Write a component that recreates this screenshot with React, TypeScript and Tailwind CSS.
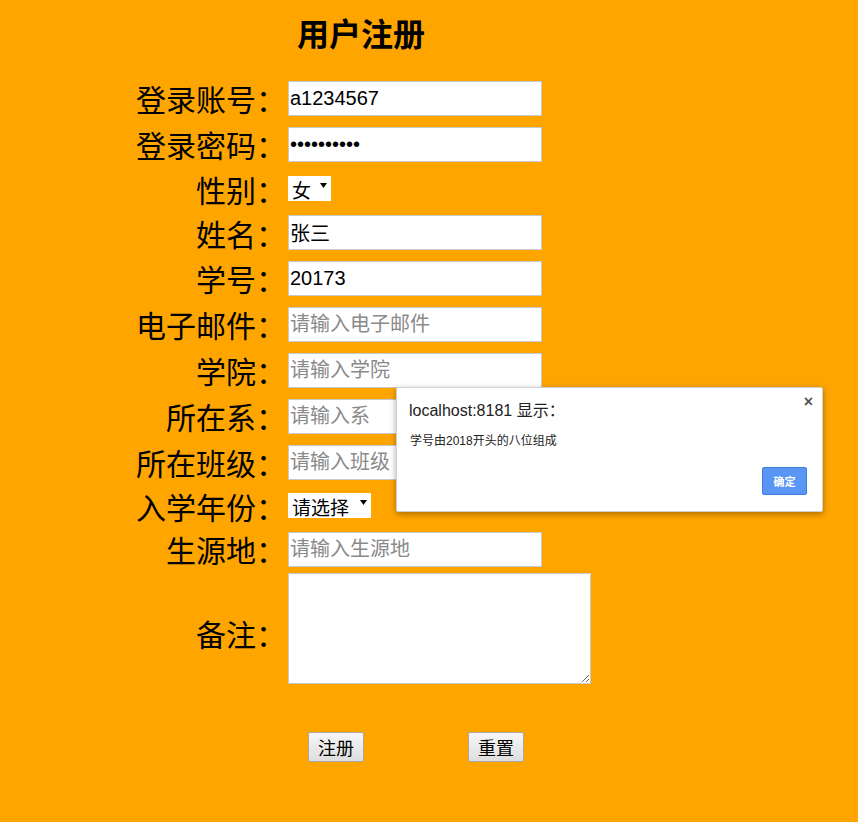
import React from 'react';

const cjk = "font-['Noto_Sans_CJK_SC',sans-serif]";

interface Field {
  label: string;
  kind: 'input' | 'select' | 'textarea';
  value?: string;
  placeholder?: string;
  h: string;
  selectW?: string;
}

const FIELDS: Field[] = [
  { label: '登录账号：', kind: 'input', value: 'a1234567', h: 'h-[46px]' },
  { label: '登录密码：', kind: 'input', value: '••••••••••', h: 'h-[46px]' },
  { label: '性别：', kind: 'select', value: '女', h: 'h-[43px]', selectW: 'w-[43px]' },
  { label: '姓名：', kind: 'input', value: '张三', h: 'h-[45px]' },
  { label: '学号：', kind: 'input', value: '20173', h: 'h-[46px]' },
  { label: '电子邮件：', kind: 'input', placeholder: '请输入电子邮件', h: 'h-[46px]' },
  { label: '学院：', kind: 'input', placeholder: '请输入学院', h: 'h-[46px]' },
  { label: '所在系：', kind: 'input', placeholder: '请输入系', h: 'h-[46px]' },
  { label: '所在班级：', kind: 'input', placeholder: '请输入班级', h: 'h-[46px]' },
  { label: '入学年份：', kind: 'select', value: '请选择', h: 'h-[41px]', selectW: 'w-[83px]' },
  { label: '生源地：', kind: 'input', placeholder: '请输入生源地', h: 'h-[46px]' },
  { label: '备注：', kind: 'textarea', h: 'h-[112px]' },
];

function FakeSelect({ value, w }: { value: string; w: string }) {
  return (
    <div className={`${w} h-[25px] bg-white flex items-center pl-[4px] pr-[4px] justify-between`}>
      <span className={`text-[19px] leading-[25px] text-black ${cjk} mt-[2px]`}>{value}</span>
      <svg width="7" height="5" viewBox="0 0 7 5" className="mb-[6px]">
        <path d="M0 0 L7 0 L3.5 5 Z" fill="#000" />
      </svg>
    </div>
  );
}

function Row({ f }: { f: Field }) {
  return (
    <div className={`flex items-center ${f.h}`}>
      <div className={`w-[288px] pr-[2px] text-right text-[30px] leading-none text-black ${cjk} ${f.kind === 'textarea' ? 'mt-[10px]' : ''}`}>
        {f.label}
      </div>
      {f.kind === 'input' && (
        <input
          readOnly
          value={f.value ?? ''}
          placeholder={f.placeholder}
          className="w-[254px] h-[35px] bg-white border border-[#c9c9c9] px-[1px] text-[20px] text-black placeholder:text-[#8a8a8a] outline-none font-['Liberation_Sans','Noto_Sans_CJK_SC',sans-serif]"
        />
      )}
      {f.kind === 'select' && <FakeSelect value={f.value ?? ''} w={f.selectW ?? 'w-[43px]'} />}
      {f.kind === 'textarea' && (
        <textarea
          readOnly
          className="w-[303px] h-[111px] bg-white border border-[#c9c9c9] outline-none resize-y"
        />
      )}
    </div>
  );
}

export default function App() {
  return (
    <div className="relative w-[858px] h-[822px] bg-[#FFA500] overflow-hidden">
      {/* Title */}
      <div className="pt-[13px] h-[75px]">
        <h1 className={`pl-[297px] text-[32px] leading-[38px] font-bold text-black ${cjk}`}>用户注册</h1>
      </div>

      {/* Form */}
      <div className="flex flex-col">
        {FIELDS.map((f) => (
          <Row key={f.label} f={f} />
        ))}
      </div>

      {/* Buttons */}
      <div className="flex pt-[48px] pl-[308px] gap-[104px]">
        {['注册', '重置'].map((t) => (
          <button
            key={t}
            className={`w-[56px] h-[30px] border border-[#a8a8a8] rounded-[2px] bg-gradient-to-b from-[#f6f6f6] to-[#dedede] text-[18px] leading-none text-black ${cjk}`}
          >
            {t}
          </button>
        ))}
      </div>

      {/* Alert dialog */}
      <div className="absolute left-[396px] top-[387px] w-[427px] h-[125px] bg-white rounded-[2px] border border-[#d0d0d0] shadow-[0_2px_6px_rgba(0,0,0,0.35)]">
        <div className="absolute right-[9px] top-[6px] text-[#555] text-[16px] font-bold leading-none font-['Liberation_Sans',sans-serif]">×</div>
        <div className="pl-[12px] pt-[13px] text-[16px] leading-[20px] text-[#222] font-['Liberation_Sans','Noto_Sans_CJK_SC',sans-serif]">
          localhost:8181 显示：
        </div>
        <div className="pl-[13px] pt-[13px] text-[12px] leading-[14px] text-[#222] font-['Liberation_Sans','Noto_Sans_CJK_SC',sans-serif]">
          学号由2018开头的八位组成
        </div>
        <button
          className={`absolute left-[365px] top-[79px] w-[45px] h-[28px] bg-[#5a97f5] border border-[#3f7ddc] rounded-[2px] text-white text-[11px] font-bold ${cjk}`}
        >
          确定
        </button>
      </div>
    </div>
  );
}
